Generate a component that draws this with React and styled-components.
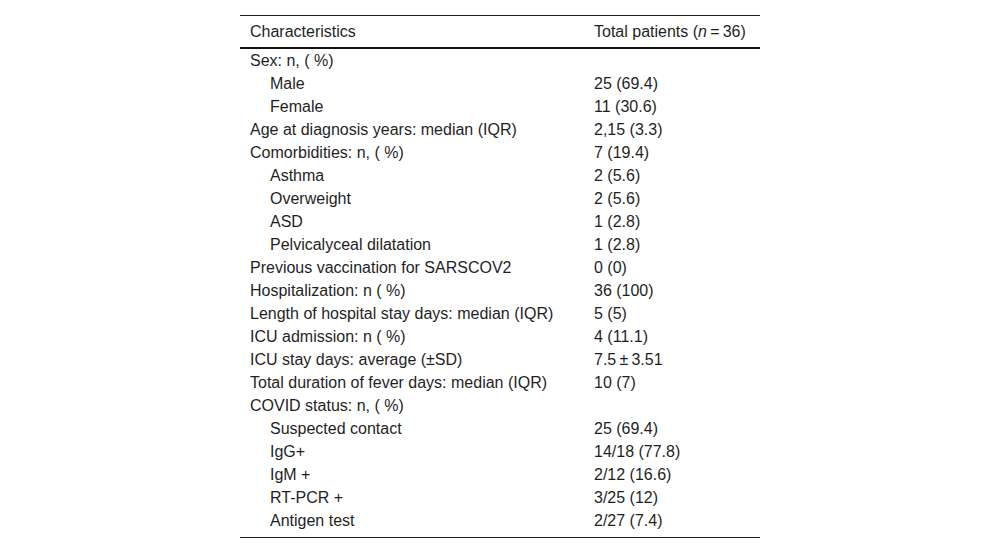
import React from "react";
import styled, { createGlobalStyle } from "styled-components";

const rows = [
  { label: "Sex: n, ( %)", value: "" },
  { label: "Male", value: "25 (69.4)", sub: true },
  { label: "Female", value: "11 (30.6)", sub: true },
  { label: "Age at diagnosis years: median (IQR)", value: "2,15 (3.3)" },
  { label: "Comorbidities: n, ( %)", value: "7 (19.4)" },
  { label: "Asthma", value: "2 (5.6)", sub: true },
  { label: "Overweight", value: "2 (5.6)", sub: true },
  { label: "ASD", value: "1 (2.8)", sub: true },
  { label: "Pelvicalyceal dilatation", value: "1 (2.8)", sub: true },
  { label: "Previous vaccination for SARSCOV2", value: "0 (0)" },
  { label: "Hospitalization: n ( %)", value: "36 (100)" },
  { label: "Length of hospital stay days: median (IQR)", value: "5 (5)" },
  { label: "ICU admission: n ( %)", value: "4 (11.1)" },
  { label: "ICU stay days: average (±SD)", value: "7.5\u2009±\u20093.51" },
  { label: "Total duration of fever days: median (IQR)", value: "10 (7)" },
  { label: "COVID status: n, ( %)", value: "" },
  { label: "Suspected contact", value: "25 (69.4)", sub: true },
  { label: "IgG+", value: "14/18 (77.8)", sub: true },
  { label: "IgM +", value: "2/12 (16.6)", sub: true },
  { label: "RT-PCR +", value: "3/25 (12)", sub: true },
  { label: "Antigen test", value: "2/27 (7.4)", sub: true },
];

const GlobalStyle = createGlobalStyle`
  body {
    margin: 0;
    background: #fff;
    font-family: "Liberation Sans", Arial, sans-serif;
    color: #1f1f1f;
  }
`;

const Wrapper = styled.div`
  width: 520px;
  margin: 15px auto 0;
  border-top: 1px solid #1f1f1f;
  border-bottom: 1px solid #1f1f1f;
  padding-bottom: 5px;
`;

const Table = styled.table`
  width: 100%;
  border-collapse: collapse;
  font-size: 16px;
  line-height: 18px;
`;

const HeadCell = styled.th`
  height: 31px;
  padding: 0 10px;
  text-align: left;
  font-weight: normal;
  border-bottom: 2px solid #111;
  white-space: nowrap;
  width: ${(p) => (p.$first ? "324px" : "auto")};
`;

const Cell = styled.td`
  height: 23px;
  padding: 0 10px 0 ${(p) => (p.$sub ? "30px" : "10px")};
  white-space: nowrap;
  vertical-align: middle;
`;

const App = () => {
  return (
    <>
      <GlobalStyle />
      <Wrapper>
        <Table>
          <thead>
            <tr>
              <HeadCell $first>Characteristics</HeadCell>
              <HeadCell>
                Total patients (<i>n</i>{"\u2009=\u2009"}36)
              </HeadCell>
            </tr>
          </thead>
          <tbody>
            {rows.map((r) => (
              <tr key={r.label}>
                <Cell $sub={r.sub}>{r.label}</Cell>
                <Cell>{r.value}</Cell>
              </tr>
            ))}
          </tbody>
        </Table>
      </Wrapper>
    </>
  );
};

export default App;
